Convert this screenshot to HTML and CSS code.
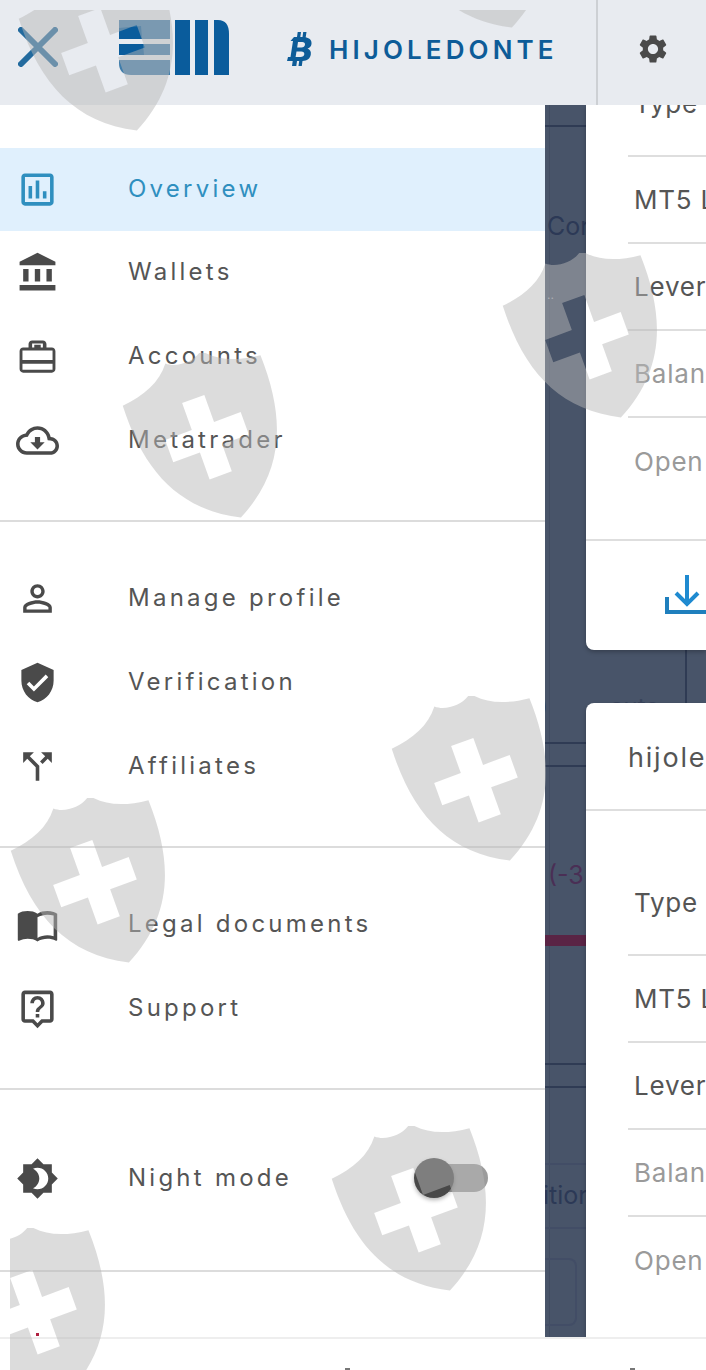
FILE: index.html
```html
<!DOCTYPE html>
<html lang="en">
<head>
  <meta charset="UTF-8">
  <title>Account menu</title>
  <link rel="stylesheet" href="styles.css">
</head>
<body>

  <svg class="defs" width="0" height="0">
    <symbol id="shield" viewBox="2 12 132 138" preserveAspectRatio="none">
      <path fill-rule="evenodd" transform="rotate(-20 78 82)" d="M16 32C36 30 52 24 62 11C70 18 86 18 94 11C104 24 120 30 140 32C142 90 125 130 78 154C31 130 14 90 16 32ZM64 47h20v24h24v20h-24v24h-20v-24h-24v-20h24z"/>
    </symbol>
  </svg>

  <div class="page">
    <header class="topbar">
      <div class="topbar-main">
        <svg class="close-icon" viewBox="0 0 40 40"><path d="M3 3L37 37M37 3L3 37"/></svg>
        <svg class="logo" viewBox="0 0 111 55">
          <path class="logo-light" d="M0 0h51v19H0zM0 24h51v11H0zM0 40h51v15H12Q0 55 0 43z"/>
          <path class="logo-dark" d="M0 8L22 6L23 19H0zM0 24H24L25 35H0z"/>
          <path class="logo-dark" d="M56 0h15v55H56zM76 0h13v55H76zM95 0h4Q110 0 110 14v41H95z"/>
        </svg>
        <div class="account-name">
          <svg class="coin-icon" viewBox="0 0 26 36">
            <path fill-rule="evenodd" d="M7 6h3l.7-5h3.3l-.7 5h2.2l.7-5h3.3l-.8 5.300C22.700 7.200 25 9.400 24.500 13C24.200 15.500 22.500 17 20.500 17.600C23 18.500 24.300 20.500 23.800 23.500C23.100 27.800 20 29.800 15.500 30l-.7 5h-3.300l.7-5h-2.200l-.7 5H5l.7-5H0l1-4h2.500L6 10H3.500zM11 11l-.8 5.500h4.300C16.500 16.500 17.800 15.500 18 13.500C18.200 12 17 11 15.300 11zM9.500 20.500L8.600 26h4.900C15.700 26 17 25 17.300 23.200C17.500 21.500 16.300 20.500 14.300 20.500z"/>
          </svg>
          <span>HIJOLEDONTE</span>
        </div>
      </div>
      <div class="topbar-settings">
        <svg class="gear-icon" viewBox="0 0 24 24"><path d="M19.14 12.94c.04-.3.06-.61.06-.94 0-.32-.02-.64-.07-.94l2.03-1.58c.18-.14.23-.41.12-.61l-1.92-3.32c-.12-.22-.37-.29-.59-.22l-2.39.96c-.5-.38-1.03-.7-1.62-.94l-.36-2.54c-.04-.24-.24-.41-.48-.41h-3.84c-.24 0-.43.17-.47.41l-.36 2.54c-.59.24-1.13.57-1.62.94l-2.39-.96c-.22-.08-.47 0-.59.22L2.74 8.870c-.12.21-.08.47.12.61l2.03 1.58c-.05.3-.09.63-.09.94s.02.64.07.94l-2.03 1.58c-.18.14-.23.41-.12.61l1.92 3.32c.12.22.37.29.59.22l2.39-.96c.5.38 1.03.7 1.62.94l.36 2.54c.05.24.24.41.48.41h3.84c.24 0 .44-.17.47-.41l.36-2.54c.59-.24 1.13-.56 1.62-.94l2.39.96c.22.08.47 0 .59-.22l1.92-3.32c.12-.22.07-.47-.12-.61l-2.010-1.58zM12 15.600c-1.980 0-3.600-1.620-3.600-3.600s1.620-3.600 3.600-3.600 3.600 1.620 3.600 3.600-1.620 3.600-3.600 3.600z"/></svg>
      </div>
    </header>

    <div class="content">
      <nav class="drawer">
        <ul class="menu">
          <li class="menu-item active">
            <svg class="menu-icon" viewBox="0 0 24 24"><path d="M19 3H5c-1.100 0-2 .9-2 2v14c0 1.100.9 2 2 2h14c1.100 0 2-.9 2-2V5c0-1.100-.9-2-2-2zm0 16H5V5h14v14zM7 10h2v7H7zM11 7h2v10h-2zM15 13h2v4h-2z"/></svg>
            Overview
          </li>
          <li class="menu-item">
            <svg class="menu-icon" viewBox="0 0 24 24"><path d="M4 10h3v7H4zM10.500 10h3v7h-3zM2 19h20v3H2zM17 10h3v7h-3zM12 1L2 6v2h20V6z"/></svg>
            Wallets
          </li>
          <li class="menu-item">
            <svg class="menu-icon" viewBox="0 0 24 24"><path fill-rule="evenodd" d="M9 3h6c1.100 0 2 .9 2 2v2h3c1.100 0 2 .9 2 2v10c0 1.100-.9 2-2 2H4c-1.100 0-2-.9-2-2V9c0-1.100.9-2 2-2h3V5c0-1.100.9-2 2-2zm0 1.800V7h1.200V5.500h3.600V7H15V4.800zM3.600 8.600v5.400h16.800V8.600zm0 7.400v3.400h16.800V16z"/></svg>
            Accounts
          </li>
          <li class="menu-item">
            <svg class="menu-icon" viewBox="0 0 24 24"><path d="M19.350 10.040C18.670 6.590 15.640 4 12 4 9.110 4 6.600 5.640 5.350 8.040 2.340 8.360 0 10.910 0 14c0 3.310 2.690 6 6 6h13c2.760 0 5-2.240 5-5 0-2.640-2.050-4.780-4.650-4.960zM19 18H6c-2.210 0-4-1.790-4-4 0-2.050 1.530-3.760 3.560-3.970l1.070-.11.5-.95C8.080 7.140 9.940 6 12 6c2.620 0 4.880 1.860 5.390 4.430l.3 1.500 1.530.11c1.560.1 2.780 1.410 2.780 2.960 0 1.650-1.350 3-3 3zm-5.550-8h-2.900v3H8l4 4 4-4h-2.550z"/></svg>
            Metatrader
          </li>
        </ul>
        <hr class="rule">
        <ul class="menu">
          <li class="menu-item">
            <svg class="menu-icon" viewBox="0 0 24 24"><path d="M12 5.900c1.160 0 2.100.94 2.100 2.100s-.94 2.100-2.100 2.100S9.900 9.160 9.900 8s.94-2.100 2.100-2.100m0 9c2.970 0 6.100 1.460 6.100 2.100v1.100H5.900V17c0-.64 3.130-2.100 6.100-2.100M12 4C9.790 4 8 5.790 8 8s1.790 4 4 4 4-1.790 4-4-1.790-4-4-4zm0 9c-2.670 0-8 1.340-8 4v3h16v-3c0-2.660-5.330-4-8-4z"/></svg>
            Manage profile
          </li>
          <li class="menu-item">
            <svg class="menu-icon" viewBox="0 0 24 24"><path d="M12 1L3 5v6c0 5.550 3.840 10.740 9 12 5.160-1.260 9-6.450 9-12V5l-9-4zm-2 16l-4-4 1.410-1.410L10 14.170l6.590-6.590L18 9l-8 8z"/></svg>
            Verification
          </li>
          <li class="menu-item">
            <svg class="menu-icon" viewBox="0 0 24 24"><path d="M14 4l2.290 2.290-2.880 2.880 1.420 1.420 2.880-2.880L20 10V4zm-4 0H4v6l2.290-2.290 4.710 4.700V20h2v-8.410l-5.290-5.300z"/></svg>
            Affiliates
          </li>
        </ul>
        <hr class="rule">
        <ul class="menu">
          <li class="menu-item">
            <svg class="menu-icon" viewBox="0 0 24 24"><path d="M21 5c-1.110-.35-2.330-.5-3.500-.5-1.950 0-4.050.4-5.500 1.500-1.450-1.100-3.550-1.500-5.500-1.500S2.450 4.900 1 6v14.650c0 .25.25.5.5.5.1 0 .15-.05.25-.05C3.100 20.450 5.050 20 6.500 20c1.950 0 4.050.4 5.500 1.500 1.350-.85 3.800-1.500 5.500-1.500 1.650 0 3.350.3 4.750 1.050.1.05.15.05.25.05.25 0 .5-.25.5-.5V6c-.6-.45-1.250-.75-2-1zm0 13.500c-1.100-.35-2.300-.5-3.500-.5-1.700 0-4.150.65-5.500 1.500V8c1.350-.85 3.800-1.500 5.500-1.500 1.200 0 2.400.15 3.500.5v11.500z"/></svg>
            Legal documents
          </li>
          <li class="menu-item">
            <svg class="menu-icon" viewBox="0 0 24 24"><path d="M19 2H5c-1.110 0-2 .9-2 2v14c0 1.100.89 2 2 2h4l3 3 3-3h4c1.100 0 2-.9 2-2V4c0-1.100-.9-2-2-2zm0 16h-4.830l-.59.59L12 20.170l-1.590-1.590-.58-.58H5V4h14v14zm-8-3h2v2h-2zm1-8c1.100 0 2 .9 2 2 0 2-3 1.750-3 5h2c0-2.250 3-2.500 3-5 0-2.210-1.790-4-4-4S8 6.790 8 9h2c0-1.100.9-2 2-2z"/></svg>
            Support
          </li>
        </ul>
        <hr class="rule">
        <div class="menu-item night-row">
          <svg class="menu-icon" viewBox="0 0 24 24"><path d="M20 8.690V4h-4.690L12 .69 8.690 4H4v4.690L.69 12 4 15.310V20h4.690L12 23.310 15.310 20H20v-4.690L23.310 12 20 8.690zM12 18c-.89 0-1.740-.2-2.500-.55C11.560 16.500 13 14.420 13 12s-1.440-4.500-3.500-5.450C10.260 6.200 11.110 6 12 6c3.310 0 6 2.690 6 6s-2.690 6-6 6z"/></svg>
          Night mode
          <span class="toggle"><span class="toggle-thumb"></span></span>
        </div>
        <hr class="rule last">
        <span class="red-dot"></span>
      </nav>

      <section class="behind">
        <div class="strip">
          <div class="strip-line first"></div>
          <div class="strip-text cor">Cor</div>
          <div class="strip-dots">..</div>
          <div class="strip-text paren">)</div>
          <div class="strip-line gap-a"></div>
          <div class="strip-line gap-b"></div>
          <div class="strip-text minus">(-3</div>
          <div class="strip-bar"></div>
          <div class="strip-line gap-c"></div>
          <div class="strip-line gap-b"></div>
          <div class="strip-line soft gap-d"></div>
          <div class="strip-text itior">itior</div>
          <div class="strip-line soft gap-e"></div>
          <div class="strip-box"></div>
        </div>

        <div class="cards">
          <div class="card card-one">
            <div class="rows scrolled">
              <div class="row first">Type</div>
              <div class="row">MT5 Login</div>
              <div class="row">Leverage</div>
              <div class="row muted">Balance</div>
              <div class="row muted last">Open</div>
            </div>
            <div class="card-action">
              <svg class="download-icon" viewBox="0 0 42 42"><path class="tray" d="M2 24V39H60"/><path class="arrow" d="M22 2V31M11 20L22 31L33 20"/></svg>
            </div>
          </div>

          <div class="card-gap">
            <span class="gap-text">auto</span>
            <span class="gap-divider"></span>
          </div>

          <div class="card card-two">
            <div class="card-title">hijoledonte</div>
            <div class="rows">
              <div class="row first">Type</div>
              <div class="row">MT5 Login</div>
              <div class="row">Leverage</div>
              <div class="row muted">Balance</div>
              <div class="row muted last">Open</div>
            </div>
          </div>
        </div>
      </section>
    </div>

    <footer class="bottom-bar">
      <span class="tip"></span>
      <span class="tip"></span>
    </footer>

    <!-- watermark sits over everything -->
    <div class="watermarks">
      <svg class="mark mark-a"><use href="#shield"/></svg>
      <svg class="mark mark-b"><use href="#shield"/></svg>
      <svg class="mark mark-c"><use href="#shield"/></svg>
      <svg class="mark mark-d"><use href="#shield"/></svg>
      <svg class="mark mark-e"><use href="#shield"/></svg>
      <svg class="mark mark-f"><use href="#shield"/></svg>
      <svg class="mark mark-g"><use href="#shield"/></svg>
      <svg class="mark mark-h"><use href="#shield"/></svg>
    </div>
  </div>

</body>
</html>
```

FILE: styles.css
```css
* {
  box-sizing: border-box;
}

body {
  margin: 0;
  font-family: Inter, "Liberation Sans", sans-serif;
  color: #555;
  background: #fff;
}

.defs {
  position: absolute;
}

.page {
  position: relative;
  width: 706px;
  height: 1370px;
  overflow: hidden;
  display: flex;
  flex-direction: column;
}

/* top bar */
.topbar {
  position: relative;
  z-index: 2;
  height: 105px;
  flex: none;
  display: flex;
  background: #e8ebf0;
}

.topbar-main {
  width: 598px;
  display: flex;
  align-items: center;
  padding-left: 18px;
  border-right: 2px solid #cdd0d4;
}

.close-icon {
  width: 40px;
  height: 40px;
  margin-top: -11px;
  fill: none;
  stroke: #226a9e;
  stroke-width: 6;
  stroke-linecap: round;
}

.logo {
  width: 111px;
  height: 55px;
  margin-left: 61px;
  margin-top: -10px;
}

.logo-light {
  fill: #3f7dab;
}

.logo-dark {
  fill: #0a5c9c;
}

.account-name {
  display: flex;
  align-items: center;
  margin-left: 57px;
  margin-top: -7px;
  color: #0d5c98;
  font-size: 26px;
  font-weight: 600;
  letter-spacing: 4.1px;
}

.coin-icon {
  width: 26px;
  height: 36px;
  margin-right: 16px;
  fill: #0d5c98;
}

.topbar-settings {
  flex: 1;
  padding: 32px 0 0 38px;
}

.gear-icon {
  display: block;
  width: 34px;
  height: 34px;
  fill: #4a4a4a;
}

/* drawer */
.content {
  flex: none;
  height: 1232px;
  display: flex;
}

.drawer {
  position: relative;
  width: 545px;
  flex: none;
  padding-top: 43px;
  background: #fff;
}

.menu {
  list-style: none;
  margin: 0;
  padding: 0;
}

.menu-item {
  height: 84px;
  display: flex;
  align-items: center;
  padding: 0 0 2px 16px;
  font-size: 24px;
  letter-spacing: 3.25px;
}

.menu-item.active {
  height: 83px;
  margin-bottom: -1px;
  padding-bottom: 3px;
  background: #e0f0fd;
  color: #2f8fbf;
}

.menu-icon {
  width: 43px;
  height: 43px;
  margin: 2px 69px 0 0;
  flex: none;
  fill: #4a4a4a;
}

.active .menu-icon {
  fill: #2f8fbf;
}

.rule {
  height: 2px;
  margin: 38px 0 34px;
  border: none;
  background: #dcdcdc;
}

.rule.last {
  margin-top: 50px;
}

.night-row {
  margin-top: 46px;
  position: relative;
}

.toggle {
  margin: 2px 57px 0 auto;
  width: 58px;
  height: 28px;
  position: relative;
  border-radius: 14px;
  background: #9c9c9c;
}

.toggle-thumb {
  position: absolute;
  left: -16px;
  top: -6px;
  width: 40px;
  height: 40px;
  border-radius: 50%;
  background: #484848;
  box-shadow: 0 2px 4px rgba(0, 0, 0, 0.3);
}

.red-dot {
  position: absolute;
  left: 36px;
  top: 1228px;
  width: 3px;
  height: 3px;
  background: #b02040;
}

/* page behind the drawer */
.behind {
  flex: 1;
  display: flex;
  overflow: hidden;
  background: #485469;
}

.strip {
  width: 41px;
  flex: none;
  overflow: hidden;
  display: flex;
  flex-direction: column;
  background: linear-gradient(90deg, transparent 4px, #414c62 4px, #414c62 5px, transparent 5px);
}

.strip-line {
  height: 2px;
  flex: none;
  background: #2f3b54;
}

.strip-line.soft {
  background: #424d66;
}

.strip-line.first {
  margin-top: 20px;
}

.strip-text {
  height: 30px;
  line-height: 30px;
  flex: none;
  font-size: 25px;
  white-space: nowrap;
  color: #2c3956;
}

.cor {
  margin-top: 84px;
  margin-left: 2px;
}

.strip-dots {
  height: 16px;
  flex: none;
  margin-top: 46px;
  margin-left: 2px;
  font-size: 12px;
  line-height: 16px;
  color: #a0a4ad;
}

.paren {
  margin-top: 387px;
  margin-left: -6px;
}

.gap-a {
  margin-top: 22px;
}

.gap-b {
  margin-top: 21px;
}

.minus {
  margin-top: 93px;
  margin-left: 3px;
  color: #4a2f55;
}

.strip-bar {
  height: 11px;
  flex: none;
  margin-top: 45px;
  background: #5a2445;
}

.gap-c {
  margin-top: 117px;
}

.gap-d {
  margin-top: 75px;
}

.itior {
  margin-top: 15px;
  margin-left: -2px;
}

.gap-e {
  margin-top: 17px;
}

.strip-box {
  width: 32px;
  height: 68px;
  flex: none;
  margin-top: 29px;
  border: 2px solid #424d66;
  border-left: none;
  border-radius: 0 8px 8px 0;
}

/* cards */
.cards {
  flex: 1;
  min-width: 0;
  display: flex;
  flex-direction: column;
}

.card {
  background: #fff;
  overflow: hidden;
  box-shadow: 0 2px 4px rgba(0, 0, 0, 0.25);
  white-space: nowrap;
  font-size: 26px;
  letter-spacing: 0.8px;
}

.card-one {
  position: relative;
  height: 545px;
  flex: none;
  border-radius: 0 0 0 8px;
}

.card-gap {
  height: 53px;
  flex: none;
  display: flex;
  overflow: hidden;
}

.gap-text {
  margin: 42px 0 0 24px;
  width: 75px;
  font-size: 24px;
  color: #39455c;
}

.gap-divider {
  width: 2px;
  background: #2f3b54;
}

.card-two {
  flex: 1;
  border-radius: 8px 0 0 0;
}

.rows {
  margin-left: 42px;
}

.rows.scrolled {
  margin-top: -35px;
}

.row {
  height: 87px;
  display: flex;
  align-items: center;
  padding-left: 6px;
  border-bottom: 2px solid #dedede;
}

.row.first {
  padding-bottom: 18px;
}

.row.muted {
  color: #9a9a9a;
}

.row.last {
  border-bottom: none;
}

.card-action {
  height: 111px;
  margin-top: 34px;
  padding: 32px 0 0 79px;
  border-top: 2px solid #dedede;
}

.download-icon {
  display: block;
  width: 42px;
  height: 42px;
  overflow: visible;
  fill: none;
  stroke-width: 4;
}

.tray {
  stroke: #1f7fbd;
}

.arrow {
  stroke: #1f8ad0;
}

.card-title {
  height: 108px;
  display: flex;
  align-items: center;
  padding: 2px 0 0 42px;
  margin-bottom: 58px;
  border-bottom: 2px solid #dedede;
  font-size: 27px;
  letter-spacing: 1.8px;
}

/* bottom */
.bottom-bar {
  flex: 1;
  display: flex;
  padding-left: 345px;
  gap: 280px;
  align-items: flex-end;
  background: #fff;
  border-top: 2px solid #eeeeee;
}

.tip {
  width: 5px;
  height: 2px;
  background: #777;
}

/* watermark layer */
.watermarks {
  position: absolute;
  left: 10px;
  top: 10px;
  right: 0;
  bottom: 0;
  z-index: 5;
  overflow: hidden;
  pointer-events: none;
}

.mark {
  position: absolute;
  width: 156px;
  height: 165px;
  fill: rgba(184, 184, 184, 0.49);
}

.mark-a { left: 8px; top: -44px; }
.mark-b { left: 112px; top: 343px; }
.mark-c { left: 492px; top: 243px; }
.mark-d { left: 381px; top: 686px; }
.mark-e { left: 0; top: 788px; }
.mark-f { left: 321px; top: 1116px; }
.mark-g { left: -60px; top: 1218px; }
.mark-h { left: 383px; top: -147px; }
```
